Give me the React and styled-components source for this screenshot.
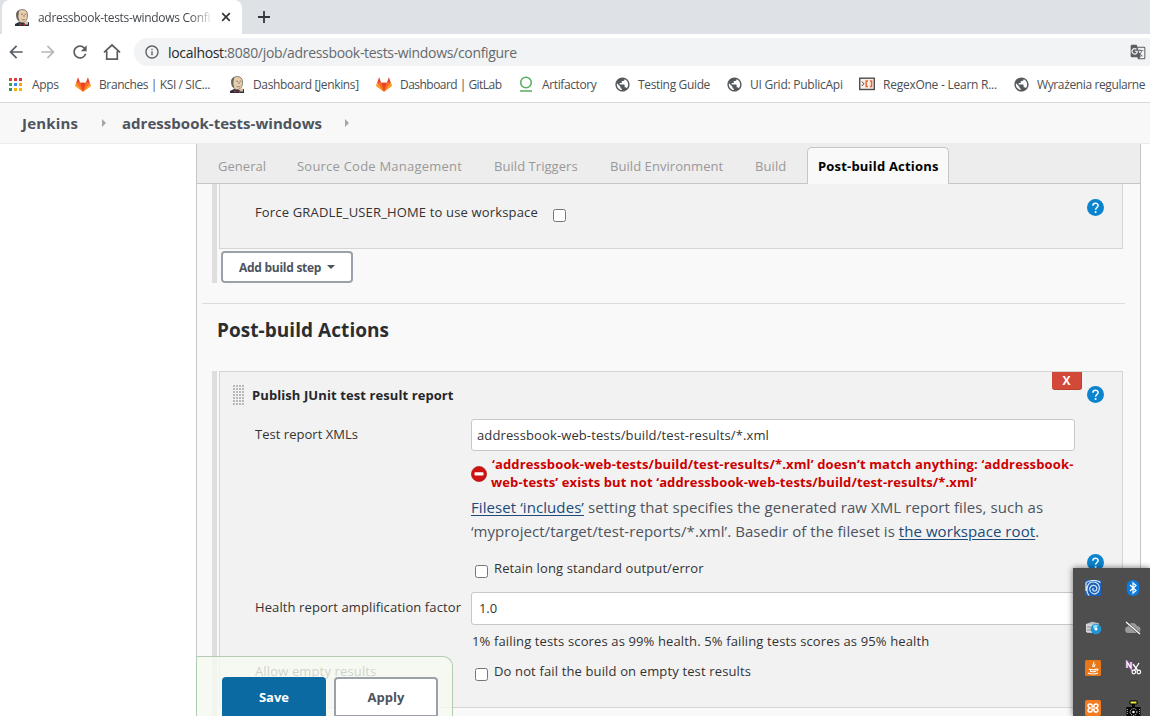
import React from "react";
import styled, { createGlobalStyle, css } from "styled-components";
import { MdArrowBack, MdArrowForward, MdRefresh, MdInfoOutline, MdPublic, MdGTranslate } from "react-icons/md";

const Global = createGlobalStyle`
  * { box-sizing: border-box; }
  html, body { margin: 0; height: 716px; overflow: hidden; background: #fff; }
  body { font-family: "Open Sans", "Noto Sans", sans-serif; color: #333; }
`;

const Screen = styled.div`
  position: relative;
  width: 1150px;
  height: 716px;
  overflow: hidden;
  display: flex;
  flex-direction: column;
`;

/* Text run with its own tracking */
const T = styled.span`
  white-space: nowrap;
  letter-spacing: ${(p) => p.$ls || 0}px;
`;

const TabStrip = styled.div`
  display: flex;
  flex: none;
  height: 34px;
  background: #dee1e6;
`;
const BrowserTab = styled.div`
  display: flex;
  align-items: center;
  width: 240px;
  margin-left: 2px;
  padding: 0 11px 0 12px;
  background: #fff;
  border-radius: 8px 8px 0 0;
  font-size: 12px;
  color: #45494d;
`;
const TabTitle = styled.div`
  flex: 1;
  margin: 0 6px 0 8px;
  white-space: nowrap;
  letter-spacing: ${(p) => p.$ls}px;
  mask-image: linear-gradient(90deg, #000 86%, rgba(0, 0, 0, 0.1) 98%);
`;
const NewTab = styled.div`
  display: flex;
  align-items: center;
  padding-left: 16px;
`;

const Toolbar = styled.div`
  display: flex;
  flex: none;
  align-items: center;
  height: 36px;
  padding-left: 6px;
  gap: 12px;
  color: #5a5e62;
`;
const Omnibox = styled.div`
  display: flex;
  flex: 1;
  align-items: center;
  height: 28px;
  padding: 0 4px 0 10px;
  gap: 8px;
  border-radius: 14px 0 0 14px;
  background: #f1f3f4;
  font-size: 14px;
`;
const Url = styled.div`
  flex: 1;
  color: #66696d;
  letter-spacing: ${(p) => p.$ls}px;
  b { font-weight: 400; color: #25282b; }
`;

const Bookmarks = styled.div`
  display: flex;
  flex: none;
  height: 33px;
  padding-left: 7px;
  border-bottom: 1px solid #d5d7d9;
  font-size: 12px;
`;
const Bookmark = styled.div`
  display: flex;
  flex: none;
  align-items: center;
  width: ${(p) => p.$w}px;
  gap: ${(p) => p.$gap}px;
  padding-bottom: 4px;
  color: #4b4f53;
  svg { flex: none; }
`;

const Crumbs = styled.div`
  display: flex;
  flex: none;
  align-items: center;
  height: 41px;
  padding-left: 22px;
  background: #f8f8f8;
  border-bottom: 1px solid #ececec;
  font-size: 15px;
  font-weight: 700;
  color: #4d545d;
`;
const Crumb = styled.span`
  width: ${(p) => p.$w}px;
  white-space: nowrap;
  letter-spacing: ${(p) => p.$ls}px;
`;
const CrumbArrow = styled.span`
  width: 0;
  height: 0;
  margin-right: 16px;
  border-left: 4px solid #a5a5a5;
  border-top: 4px solid transparent;
  border-bottom: 4px solid transparent;
`;

const Panel = styled.main`
  flex: none;
  width: 945px;
  height: 572px;
  margin-left: 196px;
  overflow: hidden;
  background: #f9f9f9;
  border: solid #c6c6c6;
  border-width: 0 1px;
`;
const Tabs = styled.nav`
  display: flex;
  align-items: flex-end;
  height: 40px;
  padding-left: 10px;
  background: #ededed;
  border-bottom: 1px solid #c6c6c6;
  font-size: 13px;
  color: #999;
`;
const Tab = styled.div`
  flex: none;
  height: 37px;
  width: ${(p) => p.$w}px;
  padding-left: 11px;
  line-height: 40px;
  white-space: nowrap;
  letter-spacing: ${(p) => p.$ls}px;
  ${(p) =>
    p.$active &&
    css`
      padding-left: 10px;
      margin-bottom: -1px;
      background: #f9f9f9;
      border: 1px solid #c6c6c6;
      border-bottom: 0;
      border-radius: 5px 5px 0 0;
      line-height: 37px;
      font-weight: 700;
      color: #000;
    `}
`;

const Section = styled.section`
  height: ${(p) => p.$h}px;
  margin-left: 15px;
  padding-left: 2px;
  border-left: 5px solid #dedede;
`;
const Box = styled.div`
  width: 904px;
  height: ${(p) => p.$h}px;
  border: 1px solid #d5d5d5;
  border-top-width: ${(p) => (p.$open ? 0 : 1)}px;
  background: #f2f2f2;
  font-size: 13px;
`;
const GradleRow = styled.div`
  display: flex;
  padding: 19px 18.5px 0 35px;
  line-height: 18px;
`;
const Spacer = styled.div`
  flex: 1;
`;
const Check = styled.span`
  display: block;
  flex: none;
  width: 13px;
  height: 13px;
  background: #fff;
  border: 1px solid #767676;
  border-radius: 2.5px;
  margin: ${(p) => p.$m};
`;
const AddStep = styled.button`
  display: flex;
  align-items: center;
  gap: 6px;
  width: 132px;
  height: 32px;
  margin: 2px 0 0 2px;
  padding: 0 0 0 16px;
  background: #fff;
  border: 2px solid #9ba1a8;
  border-radius: 4px;
  font: 700 12px "Open Sans", sans-serif;
  color: #4d545d;
`;
const Caret = styled.span`
  border: 4px solid transparent;
  border-top-color: #4d545d;
  border-bottom: 0;
`;
const Rule = styled.div`
  width: 923px;
  height: 1px;
  margin: 20px 0 0 5px;
  background: #dcdcdc;
`;
const Heading = styled.h2`
  height: 67px;
  margin: 0 0 0 20px;
  line-height: 52px;
  font-size: 19px;
  letter-spacing: ${(p) => p.$ls}px;
  color: #2b2e31;
`;

const BoxHead = styled.div`
  display: flex;
  height: 47px;
  padding: 0 18.5px 0 13px;
  line-height: 46px;
  font-weight: 700;
  color: #24272a;
`;
const Handle = styled.span`
  width: 12px;
  height: 21px;
  margin: 13px 7px 0 0;
  background: radial-gradient(circle at 1px 1px, #b8b8b8 0.8px, #fdfdfd 1.2px, transparent 1.6px) 0 0 / 3px 3px;
`;
const CloseBtn = styled.span`
  width: 30px;
  height: 18px;
  margin-right: 4.5px;
  background: #d24939;
  border: solid #b9402f;
  border-width: 0 1px 1px 0;
  border-radius: 0 0 3px 3px;
  color: #fff;
  font-size: 12px;
  line-height: 18px;
  text-align: center;
`;
const Row = styled.div`
  display: flex;
  height: ${(p) => p.$h}px;
  padding-left: 35px;
`;
const Label = styled.div`
  flex: none;
  width: 216px;
  padding-top: ${(p) => p.$t}px;
  line-height: 18px;
  white-space: nowrap;
  letter-spacing: ${(p) => p.$ls}px;
`;
const Field = styled.div`
  width: 604px;
`;
const Input = styled.div`
  height: ${(p) => p.$h}px;
  padding-left: ${(p) => p.$pad || 5}px;
  line-height: ${(p) => p.$h - 2}px;
  background: #fff;
  border: 1px solid #c8c8c8;
  border-radius: 3px;
  letter-spacing: ${(p) => p.$ls}px;
`;
const ErrorMsg = styled.div`
  display: flex;
  align-items: center;
  gap: 4px;
  height: 42px;
  padding-top: 3px;
  margin-bottom: 2px;
  font-weight: 700;
  line-height: 18px;
  color: #c00;
  svg { flex: none; }
`;
const Lines = styled.div`
  display: flex;
  flex-direction: column;
  padding-bottom: 2px;
  ${T}:first-child { padding-left: 1px; }
`;
const Help = styled.div`
  display: flex;
  flex-direction: column;
  font-size: 15px;
  line-height: 24px;
  color: #4d545d;
  a { color: #204a78; text-decoration: underline; text-underline-offset: 2px; }
`;
const CheckRow = styled.div`
  display: flex;
  width: 632.5px;
  padding: ${(p) => p.$t || 0}px 0 0 4px;
  line-height: 18px;
`;
const Hint = styled.div`
  padding: 6px 0 0 1px;
  line-height: 20px;
`;

const BottomBar = styled.div`
  position: absolute;
  left: 196px;
  bottom: 0;
  display: flex;
  gap: 8px;
  width: 257px;
  height: 60px;
  padding: 20px 0 0 25px;
  background: rgba(246, 250, 241, 0.8);
  border: 1px solid #b3cbb3;
  border-bottom: 0;
  border-radius: 0 10px 0 0;
`;
const Action = styled.button`
  width: 104px;
  height: 40px;
  padding: 0 0 1px;
  border-radius: 4px 4px 0 0;
  border: 2px solid ${(p) => (p.$primary ? "#0b6aa2" : "#9ba1a8")};
  background: ${(p) => (p.$primary ? "#0b6aa2" : "#fff")};
  color: ${(p) => (p.$primary ? "#fff" : "#4d545d")};
  font: 700 13px "Open Sans", sans-serif;
`;
const Tray = styled.div`
  position: absolute;
  right: 0;
  bottom: 0;
  display: grid;
  grid-template-columns: 40px 40px;
  grid-auto-rows: 40px;
  width: 77px;
  height: 148px;
  background: #4e4e4e;
  box-shadow: 0 0 6px rgba(0, 0, 0, 0.55);
  overflow: hidden;
`;
const TrayCell = styled.div`
  display: flex;
  align-items: center;
  justify-content: center;
`;

const Cross = () => (
  <svg width="10" height="10" viewBox="0 0 10 10">
    <path d="m1.200 1.200 7.600 7.600m0-7.600L1.200 8.800" stroke="#33373b" strokeWidth="1.700" />
  </svg>
);
const Plus = () => (
  <svg width="12" height="12" viewBox="0 0 12 12">
    <path d="M6 0v12M0 6h12" stroke="#33373b" strokeWidth="1.800" />
  </svg>
);
const Butler = () => (
  <svg width="16" height="17" viewBox="0 0 16 17">
    <path d="M1 17v-2l4-2 6 1 4-1v4z" fill="#26313d" />
    <path d="M3 4C4 1 7 0 10 .8c3 .8 3.7 3.200 3.500 6.200-.2 3.500-1.500 6-4.500 6.500C5.500 14 3.300 11 2.800 8z" fill="#e8cfae" stroke="#4a4038" strokeWidth=".6" />
    <path d="M2.300 7C1.500 3 4 1 5.500.9L4.800 4l-.5 3.800L5.500 12 3 10z" fill="#6d655c" />
    <path d="M7 5.200h2M10.600 5.200h1.800M7.500 10.200c1 .9 2.700.8 3.600 0M10 6v2" stroke="#6a5a4d" strokeWidth=".7" fill="none" />
    <path d="m5 14 2.800 1.200L5.500 17zM11 14l-2.600 1.200L11 17z" fill="#a8343a" />
    <path d="M10.500 12.500h3.500v3h-3z" fill="#d8bda0" />
  </svg>
);
const Fox = () => (
  <svg width="16" height="15" viewBox="0 0 34 31">
    <path d="M17 31 33.500 18.500 31.500 12H2.500L.5 18.500z" fill="#fc6d26" />
    <path d="M17 31 11 12h12z" fill="#e24329" />
    <path d="m2.500 12-2 6.500L17 31zM31.500 12l2 6.500L17 31z" fill="#fca326" />
    <path d="m17 31-14.500-19H11zM17 31l14.500-19H23z" fill="#fc6d26" />
    <path d="M2.500 12 6.500 0 11 12zM31.500 12 27.500 0 23 12z" fill="#e24329" />
  </svg>
);
const Apps = () => (
  <svg width="15" height="15" viewBox="0 0 15 15">
    {["#ea4335", "#d93a44", "#d93a44", "#34a853", "#4285f4", "#f4a20b", "#34936a", "#f4b400", "#f4b400"].map((c, i) => (
      <rect key={i} x={2 + (i % 3) * 5} y={1 + Math.floor(i / 3) * 5} width="3" height="3" fill={c} />
    ))}
  </svg>
);
const Ring = () => (
  <svg width="14" height="16" viewBox="0 0 14 16">
    <circle cx="7" cy="6.500" r="5.300" fill="none" stroke="#56ae5b" strokeWidth="1.500" />
    <path d="M1 15h12" stroke="#56ae5b" strokeWidth="1.500" />
  </svg>
);
const Regex = () => (
  <svg width="16" height="14" viewBox="0 0 16 14">
    <rect x=".7" y="1.200" width="14.600" height="11.300" fill="#fbeee4" stroke="#4d4d4d" strokeWidth="1.400" />
    <path d="m3 4.500 1.800 2.200L3 8.900" fill="none" stroke="#444" />
    <path d="M9 4H7.200v5.500H9M10.800 4h1.800v5.500h-1.800" fill="none" stroke="#e0683a" strokeWidth="1.500" />
  </svg>
);
const HomeIcon = () => (
  <svg width="20" height="20" viewBox="0 0 20 20">
    <path d="M2 10.300 10 3l8 7.300M4.700 9v8.200h10.600V9" fill="none" stroke="#5a5e62" strokeWidth="1.700" />
  </svg>
);
const HelpIcon = ({ top }) => (
  <svg width="17" height="17" viewBox="0 0 17 17" style={{ marginTop: top, flex: "none" }}>
    <circle cx="8.500" cy="8.500" r="8.500" fill="#0b84cf" />
    <path d="M5.900 6.700c0-3.400 5.200-3.300 5.200-.2 0 2-2.500 2.100-2.500 4.300" fill="none" stroke="#fff" strokeWidth="1.500" />
    <circle cx="8.600" cy="13.100" r="1" fill="#fff" />
  </svg>
);
const Stop = () => (
  <svg width="16" height="16" viewBox="0 0 16 16">
    <circle cx="8" cy="8" r="7.600" fill="#cf1212" stroke="#a80909" strokeWidth=".6" />
    <rect x="3.500" y="6.200" width="9" height="3.400" rx=".8" fill="#fff" />
  </svg>
);

const Swirl = () => (
  <svg width="16" height="16" viewBox="0 0 16 16">
    <rect width="16" height="16" rx="1" fill="#1d60b8" />
    <path d="M4 15.500C.5 12 1.500 2 8 2c4.800 0 6.800 3.200 6.300 7s-3.800 5.500-6.300 4.500-3.800-3.500-3-5.800 4.600-3.400 6.200-1-.2 4.600-2 4.300-1.900-2.400-.6-2.700M15.500 2.500C12-.5 3.500 0 1 3v8" fill="none" stroke="#d5eafc" strokeWidth="1.200" />
  </svg>
);
const BlueTooth = () => (
  <svg width="14" height="18" viewBox="0 0 14 18">
    <rect x=".7" y="1" width="12.600" height="16" rx="6" fill="#0b7be0" />
    <path d="m4 6 6 5.500-3 2.700V3.800l3 2.700L4 12" fill="none" stroke="#fff" strokeWidth="1.200" />
  </svg>
);
const DiscBox = () => (
  <svg width="17" height="14" viewBox="0 0 17 14">
    <path d="M1 3 7 .8l7 1.500v8L2 12z" fill="#b9c1c6" />
    <path d="m1 3 6 .6V12L1 11z" fill="#d4d8da" />
    <path d="M2 6h4M2 9h4" stroke="#7d878e" />
    <circle cx="11" cy="8" r="5.300" fill="#2196d6" />
    <path d="M8 5c2-2 4-1.500 5-.5L11.500 7 9 8z" fill="#8be0f5" />
    <circle cx="11" cy="8" r="1.500" fill="#fff" />
  </svg>
);
const CloudOff = () => (
  <svg width="18" height="14" viewBox="0 0 18 14">
    <path d="M4 12a3.300 3.300 0 0 1-.3-6.500A5 5 0 0 1 13 5a3.600 3.600 0 0 1 1 7z" fill="#9a9a9a" />
    <path d="m2 1 14 12" stroke="#4e4e4e" strokeWidth="2.400" />
    <path d="m2 1 14 12" stroke="#fff" strokeWidth="1.200" />
  </svg>
);
const Java = () => (
  <svg width="16" height="16" viewBox="0 0 16 16">
    <rect width="16" height="16" rx="1.500" fill="#e77718" />
    <path d="M8.500 2c2 1.800-2.500 2.700-.3 5M10.500 4.500C8.500 5.500 9.500 6 9 7.300M4 9c1.500 1 6 1 7.500 0 2-.5 1.500 1.700 0 2M5 11c1.500.8 4.500.8 6 0M3 13c3 1.200 7 1.200 10 0" fill="none" stroke="#fff" strokeWidth="1.100" />
  </svg>
);
const Scissors = () => (
  <svg width="17" height="16" viewBox="0 0 17 16">
    <path d="M2 8V2l4 6V2" fill="none" stroke="#cf62dc" strokeWidth="3" opacity=".6" />
    <path d="M2 8V2l4 6V2M8 4l5 7M14 3l-5 8" fill="none" stroke="#fff" strokeWidth="1.300" />
    <circle cx="8.800" cy="12" r="1.800" fill="none" stroke="#fff" strokeWidth="1.200" />
    <circle cx="13.800" cy="12" r="1.800" fill="none" stroke="#fff" strokeWidth="1.200" />
  </svg>
);
const Xampp = () => (
  <svg width="16" height="16" viewBox="0 0 16 16">
    <rect width="16" height="16" rx="2" fill="#f47b20" />
    <path d="M7 5.500C7 3.600 3 3.200 3 5.600 3 7 4 7.600 5 8c-1 .4-2 1-2 2.400 0 2.400 4 2 4 .1V9.200h2v1.300c0 1.900 4 2.300 4-.1C13 9 12 8.400 11 8c1-.4 2-1 2-2.400 0-2.400-4-2-4-.1v1.300H7z" fill="none" stroke="#fff" strokeWidth="1.500" />
  </svg>
);
const Camera = () => (
  <svg width="17" height="17" viewBox="0 0 17 17">
    <path d="M5 1h7v3H5z" fill="#f3ef42" stroke="#000" />
    <path d="M7 4h3v3h5.500v9.500h-14V7H7z" fill="#050505" />
    <circle cx="8.500" cy="12" r="3.400" fill="none" stroke="#ddd" strokeWidth="1" strokeDasharray="1.200 1" />
    <circle cx="8.500" cy="12" r="1.300" fill="#eee" />
    <path d="M2.500 9v6M14.500 9v6" stroke="#999" strokeDasharray="1 1" />
  </svg>
);

const bookmarks = [
  [Apps, "Apps", 68, -0.35, 10],
  [Fox, "Branches | KSI / SIC...", 154, -0.39, 8],
  [Butler, "Dashboard [Jenkins]", 147, -0.36, 8],
  [Fox, "Dashboard | GitLab", 143, -0.53, 8],
  [Ring, "Artifactory", 95, -0.38, 9],
  [null, "Testing Guide", 112, -0.35, 7],
  [null, "UI Grid: PublicApi", 133, -0.25, 7],
  [Regex, "RegexOne - Learn R...", 154, -0.25, 8],
  [null, "Wyrażenia regularne", 137, -0.38, 7],
];

const tabs = [
  ["General", 79, 0.04],
  ["Source Code Management", 197, 0.22],
  ["Build Triggers", 116, 0.05],
  ["Build Environment", 145, 0.06],
  ["Build", 63, 0.1],
];

export default function App() {
  return (
    <Screen>
      <Global />
      <TabStrip>
        <BrowserTab>
          <Butler />
          <TabTitle $ls={-0.3}>adressbook-tests-windows Confi</TabTitle>
          <Cross />
        </BrowserTab>
        <NewTab><Plus /></NewTab>
      </TabStrip>
      <Toolbar>
        <MdArrowBack size={20} />
        <MdArrowForward size={20} color="#b6b8ba" />
        <MdRefresh size={20} />
        <HomeIcon />
        <Omnibox>
          <MdInfoOutline size={16} />
          <Url $ls={-0.32}><b>localhost</b>:8080/job/adressbook-tests-windows/configure</Url>
          <MdGTranslate size={16} />
        </Omnibox>
      </Toolbar>
      <Bookmarks>
        {bookmarks.map(([Icon, text, w, ls, gap]) => (
          <Bookmark key={text} $w={w} $gap={gap}>
            {Icon ? <Icon /> : <MdPublic size={17} color="#54585c" />}
            <T $ls={ls}>{text}</T>
          </Bookmark>
        ))}
      </Bookmarks>
      <Crumbs>
        <Crumb $w={80} $ls={0.17}>Jenkins</Crumb>
        <CrumbArrow />
        <Crumb $w={223} $ls={0.03}>adressbook-tests-windows</Crumb>
        <CrumbArrow />
      </Crumbs>
      <Panel>
        <Tabs>
          {tabs.map(([text, w, ls]) => (
            <Tab key={text} $w={w} $ls={ls}>{text}</Tab>
          ))}
          <Tab $active $w={142} $ls={0.19}>Post-build Actions</Tab>
        </Tabs>
        <Section $h={99}>
          <Box $h={65} $open>
            <GradleRow>
              <T $ls={0.16}>Force GRADLE_USER_HOME to use workspace</T>
              <Check $m="6px 0 0 15px" />
              <Spacer />
              <HelpIcon top={-4} />
            </GradleRow>
          </Box>
          <AddStep><T $ls={-0.27}>Add build step</T><Caret /></AddStep>
        </Section>
        <Rule />
        <Heading $ls={0.05}>Post-build Actions</Heading>
        <Section $h={345}>
          <Box $h={337}>
            <BoxHead>
              <Handle />
              <T $ls={0.09}>Publish JUnit test result report</T>
              <Spacer />
              <CloseBtn>X</CloseBtn>
              <HelpIcon top={14} />
            </BoxHead>
            <Row $h={173}>
              <Label $t={6} $ls={0.03}>Test report XMLs</Label>
              <Field>
                <Input $h={32} $ls={0.12}>addressbook-web-tests/build/test-results/*.xml</Input>
                <ErrorMsg>
                  <Stop />
                  <Lines>
                    <T $ls={0.15}>‘addressbook-web-tests/build/test-results/*.xml’ doesn’t match anything: ‘addressbook-</T>
                    <T $ls={0.13}>web-tests’ exists but not ‘addressbook-web-tests/build/test-results/*.xml’</T>
                  </Lines>
                </ErrorMsg>
                <Help>
                  <T $ls={0.08}><a>Fileset ‘includes’</a> setting that specifies the generated raw XML report files, such as</T>
                  <T $ls={0.06}>‘myproject/target/test-reports/*.xml’. Basedir of the fileset is <a>the workspace root</a>.</T>
                </Help>
                <CheckRow $t={16}>
                  <Check $m="6px 6px 0 0" />
                  <T $ls={0.11}>Retain long standard output/error</T>
                  <Spacer />
                  <HelpIcon top={-5} />
                </CheckRow>
              </Field>
            </Row>
            <Row $h={70}>
              <Label $t={6} $ls={0.1}>Health report amplification factor</Label>
              <Field>
                <Input $h={33} $pad={7} $ls={-0.1}>1.0</Input>
                <Hint><T $ls={0.13}>1% failing tests scores as 99% health. 5% failing tests scores as 95% health</T></Hint>
              </Field>
            </Row>
            <Row $h={40}>
              <Label $t={0} $ls={0.14}>Allow empty results</Label>
              <CheckRow>
                <Check $m="6px 6px 0 0" />
                <T $ls={0.14}>Do not fail the build on empty test results</T>
              </CheckRow>
            </Row>
          </Box>
        </Section>
      </Panel>
      <BottomBar>
        <Action $primary>Save</Action>
        <Action>Apply</Action>
      </BottomBar>
      <Tray>
        {[Swirl, BlueTooth, DiscBox, CloudOff, Java, Scissors, Xampp, Camera].map((Icon, i) => (
          <TrayCell key={i}><Icon /></TrayCell>
        ))}
      </Tray>
    </Screen>
  );
}
